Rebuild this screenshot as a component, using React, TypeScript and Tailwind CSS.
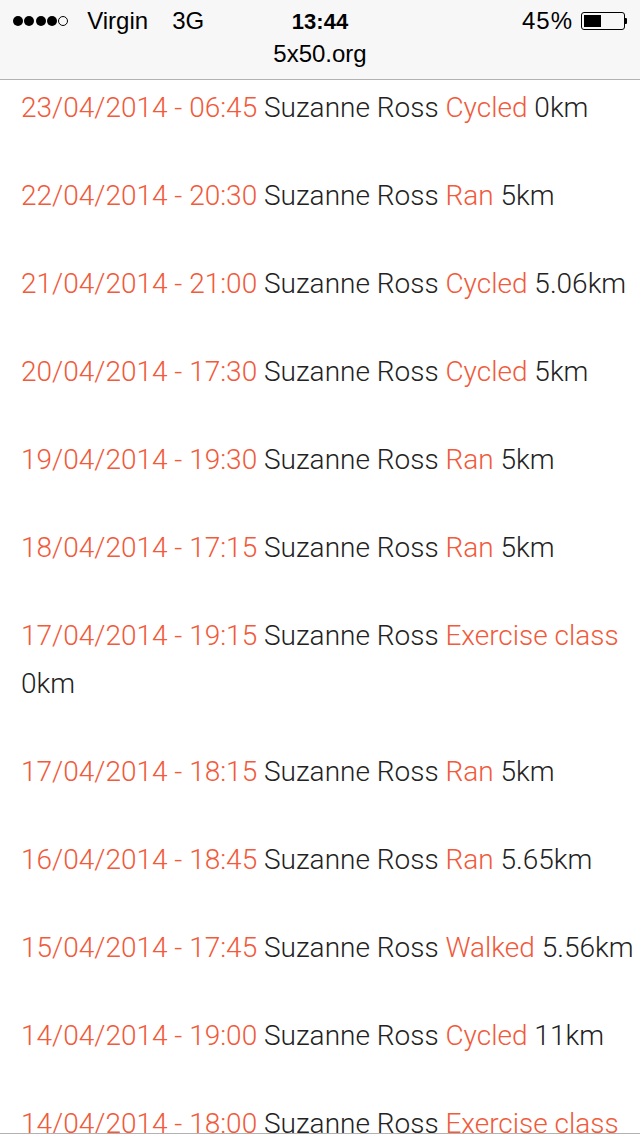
const entries: { date: string; activity: string; distance: string }[] = [
  { date: '23/04/2014 - 06:45', activity: 'Cycled', distance: '0km' },
  { date: '22/04/2014 - 20:30', activity: 'Ran', distance: '5km' },
  { date: '21/04/2014 - 21:00', activity: 'Cycled', distance: '5.06km' },
  { date: '20/04/2014 - 17:30', activity: 'Cycled', distance: '5km' },
  { date: '19/04/2014 - 19:30', activity: 'Ran', distance: '5km' },
  { date: '18/04/2014 - 17:15', activity: 'Ran', distance: '5km' },
  { date: '17/04/2014 - 19:15', activity: 'Exercise class', distance: '0km' },
  { date: '17/04/2014 - 18:15', activity: 'Ran', distance: '5km' },
  { date: '16/04/2014 - 18:45', activity: 'Ran', distance: '5.65km' },
  { date: '15/04/2014 - 17:45', activity: 'Walked', distance: '5.56km' },
  { date: '14/04/2014 - 19:00', activity: 'Cycled', distance: '11km' },
  { date: '14/04/2014 - 18:00', activity: 'Exercise class', distance: '0km' },
];

function StatusBar() {
  return (
    <div className="shrink-0 bg-[#f7f7f7] border-b border-[#b2b2b2] h-20 font-['Liberation_Sans',sans-serif] text-black">
      <div className="relative flex items-center justify-between h-[42px] pl-[13px] pr-[13px]">
        <div className="flex items-center text-[24px]">
          <div className="flex items-center gap-[1.3px] mr-[19px]">
            <div className="w-[10px] h-[10px] rounded-full bg-black" />
            <div className="w-[10px] h-[10px] rounded-full bg-black" />
            <div className="w-[10px] h-[10px] rounded-full bg-black" />
            <div className="w-[10px] h-[10px] rounded-full bg-black" />
            <div className="w-[10px] h-[10px] rounded-full border border-black" />
          </div>
          <span>Virgin</span>
          <span className="ml-[24px]">3G</span>
        </div>
        <div className="absolute left-0 right-0 text-center font-bold text-[22px] pointer-events-none">13:44</div>
        <div className="flex items-center text-[24px]">
          <span className="mr-[8px] tracking-[1px]">45%</span>
          <div className="flex items-center">
            <div className="w-[44px] h-[18px] border border-black rounded-[3px] p-[2px]">
              <div className="w-[17px] h-full bg-black" />
            </div>
            <div className="w-[2px] h-[6px] bg-black rounded-r-[1px]" />
          </div>
        </div>
      </div>
      <div className="text-center text-[24px] leading-[24px]">5x50.org</div>
    </div>
  );
}

export default function App() {
  return (
    <div className="w-[640px] h-[1136px] bg-white flex flex-col overflow-hidden">
      <StatusBar />
      <div className="flex-1 overflow-hidden pt-1 pl-[21px] font-['Roboto',sans-serif] font-light text-[28px] leading-[48px] text-[#222]">
        {entries.map((e, i) => (
          <p key={i} className="mb-10">
            <span className="text-[#f15a3a]">{e.date}</span> Suzanne Ross{' '}
            <span className="text-[#f15a3a]">{e.activity}</span> {e.distance}
          </p>
        ))}
      </div>
      <div className="shrink-0 h-[3px] border-t border-[#b2b2b2] bg-white" />
    </div>
  );
}
